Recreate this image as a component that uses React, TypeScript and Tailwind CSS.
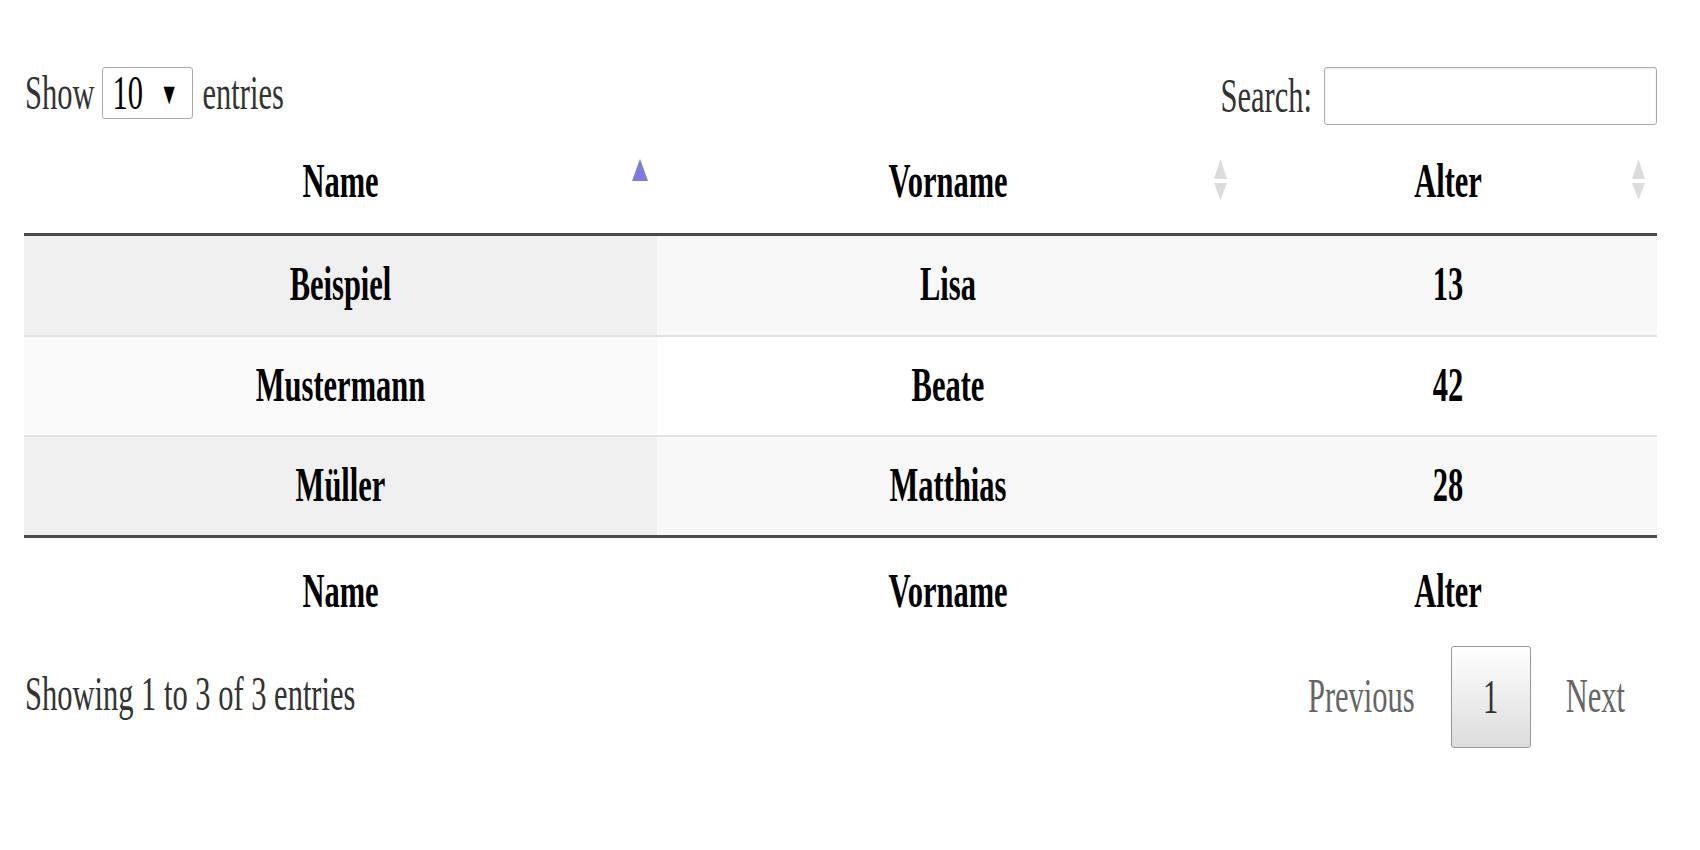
import React from "react";

// text in the reference is stretched tall, so every label gets a vertical scale
function T({ children, className = "" }: { children: React.ReactNode; className?: string }) {
  return <span className={`inline-block scale-y-[1.6] leading-none ${className}`}>{children}</span>;
}

function SortIcon({ dir }: { dir: "asc" | "both" }) {
  if (dir === "asc") {
    return (
      <svg width="16" height="22" viewBox="0 0 16 22" className="absolute right-[9px] top-[31px]">
        <polygon points="8,0 16,22 0,22" fill="#7b7be0" />
      </svg>
    );
  }
  return (
    <svg width="13" height="41" viewBox="0 0 13 41" className="absolute right-[12px] top-[31px]">
      <polygon points="6.5,0 13,20 0,20" fill="#dcdcdc" />
      <polygon points="0,24 13,24 6.5,41" fill="#dcdcdc" />
    </svg>
  );
}

const rows = [
  { name: "Beispiel", vorname: "Lisa", alter: 13 },
  { name: "Mustermann", vorname: "Beate", alter: 42 },
  { name: "Müller", vorname: "Matthias", alter: 28 },
];

export default function App() {
  return (
    <div className="min-h-[850px] w-full bg-white font-['Liberation_Serif',serif] text-[30.5px]">
      <div className="ml-[24px] w-[1633px] pt-[67px]">
        {/* length + filter */}
        <div className="flex h-[58px] items-start justify-between">
          <div className="flex h-[52px] items-center text-[#333]">
            <T className="ml-px">Show</T>
            <div className="ml-[7px] flex h-[52px] w-[91px] items-center justify-between rounded-[3px] border border-[#aaa] bg-white pl-[10px] pr-[13px] text-black">
              <T>10</T>
              <T className="text-[19px]">▼</T>
            </div>
            <T className="ml-[10px]">entries</T>
          </div>
          <div className="flex h-[58px] items-center text-[#333]">
            <T>Search:</T>
            <div className="ml-[12px] h-[58px] w-[333px] rounded-[3px] border border-[#aaa] bg-white shadow-[inset_0_1px_2px_rgba(0,0,0,0.08)]" />
          </div>
        </div>

        {/* table */}
        <table className="mt-[3px] w-[1633px] table-fixed border-collapse">
          <colgroup>
            <col className="w-[633px]" />
            <col className="w-[582px]" />
            <col className="w-[418px]" />
          </colgroup>
          <thead>
            <tr className="border-b-[3px] border-[#4a4a4a]">
              <th className="relative h-[106px] p-0 pt-[4px] text-center font-bold text-black">
                <T>Name</T>
                <SortIcon dir="asc" />
              </th>
              <th className="relative h-[106px] p-0 pt-[4px] text-center font-bold text-black">
                <T>Vorname</T>
                <SortIcon dir="both" />
              </th>
              <th className="relative h-[106px] p-0 pt-[4px] text-center font-bold text-black">
                <T>Alter</T>
                <SortIcon dir="both" />
              </th>
            </tr>
          </thead>
          <tbody>
            {rows.map((r, i) => {
              const odd = i % 2 === 0;
              const h = i === 0 ? "h-[102px]" : "h-[100px]";
              return (
                <tr key={r.name} className={i === 0 ? "" : "border-t-2 border-[#e2e2e2]"}>
                  <td className={`${h} p-0 text-center font-bold text-black ${odd ? "bg-[#f0f0f0]" : "bg-[#fafafa]"}`}>
                    <T>{r.name}</T>
                  </td>
                  <td className={`${h} p-0 text-center font-bold text-black ${odd ? "bg-[#f8f8f8]" : "bg-white"}`}>
                    <T>{r.vorname}</T>
                  </td>
                  <td className={`${h} p-0 text-center font-bold text-black ${odd ? "bg-[#f8f8f8]" : "bg-white"}`}>
                    <T>{r.alter}</T>
                  </td>
                </tr>
              );
            })}
          </tbody>
          <tfoot>
            <tr className="border-t-[3px] border-[#4a4a4a]">
              <th className="h-[110px] p-0 text-center font-bold text-black">
                <T>Name</T>
              </th>
              <th className="h-[110px] p-0 text-center font-bold text-black">
                <T>Vorname</T>
              </th>
              <th className="h-[110px] p-0 text-center font-bold text-black">
                <T>Alter</T>
              </th>
            </tr>
          </tfoot>
        </table>

        {/* info + paging */}
        <div className="flex h-[102px] items-center justify-between">
          <T className="ml-px -mt-[6px] text-[#333]">Showing 1 to 3 of 3 entries</T>
          <div className="flex items-center">
            <span className="px-[32px] text-[#666]">
              <T>Previous</T>
            </span>
            <span className="ml-[4px] flex h-[102px] w-[80px] items-center justify-center rounded-[3px] border border-[#979797] bg-gradient-to-b from-white to-[#dcdcdc] text-[#333]">
              <T>1</T>
            </span>
            <span className="ml-[3px] px-[32px] text-[#666]">
              <T>Next</T>
            </span>
          </div>
        </div>
      </div>
    </div>
  );
}
